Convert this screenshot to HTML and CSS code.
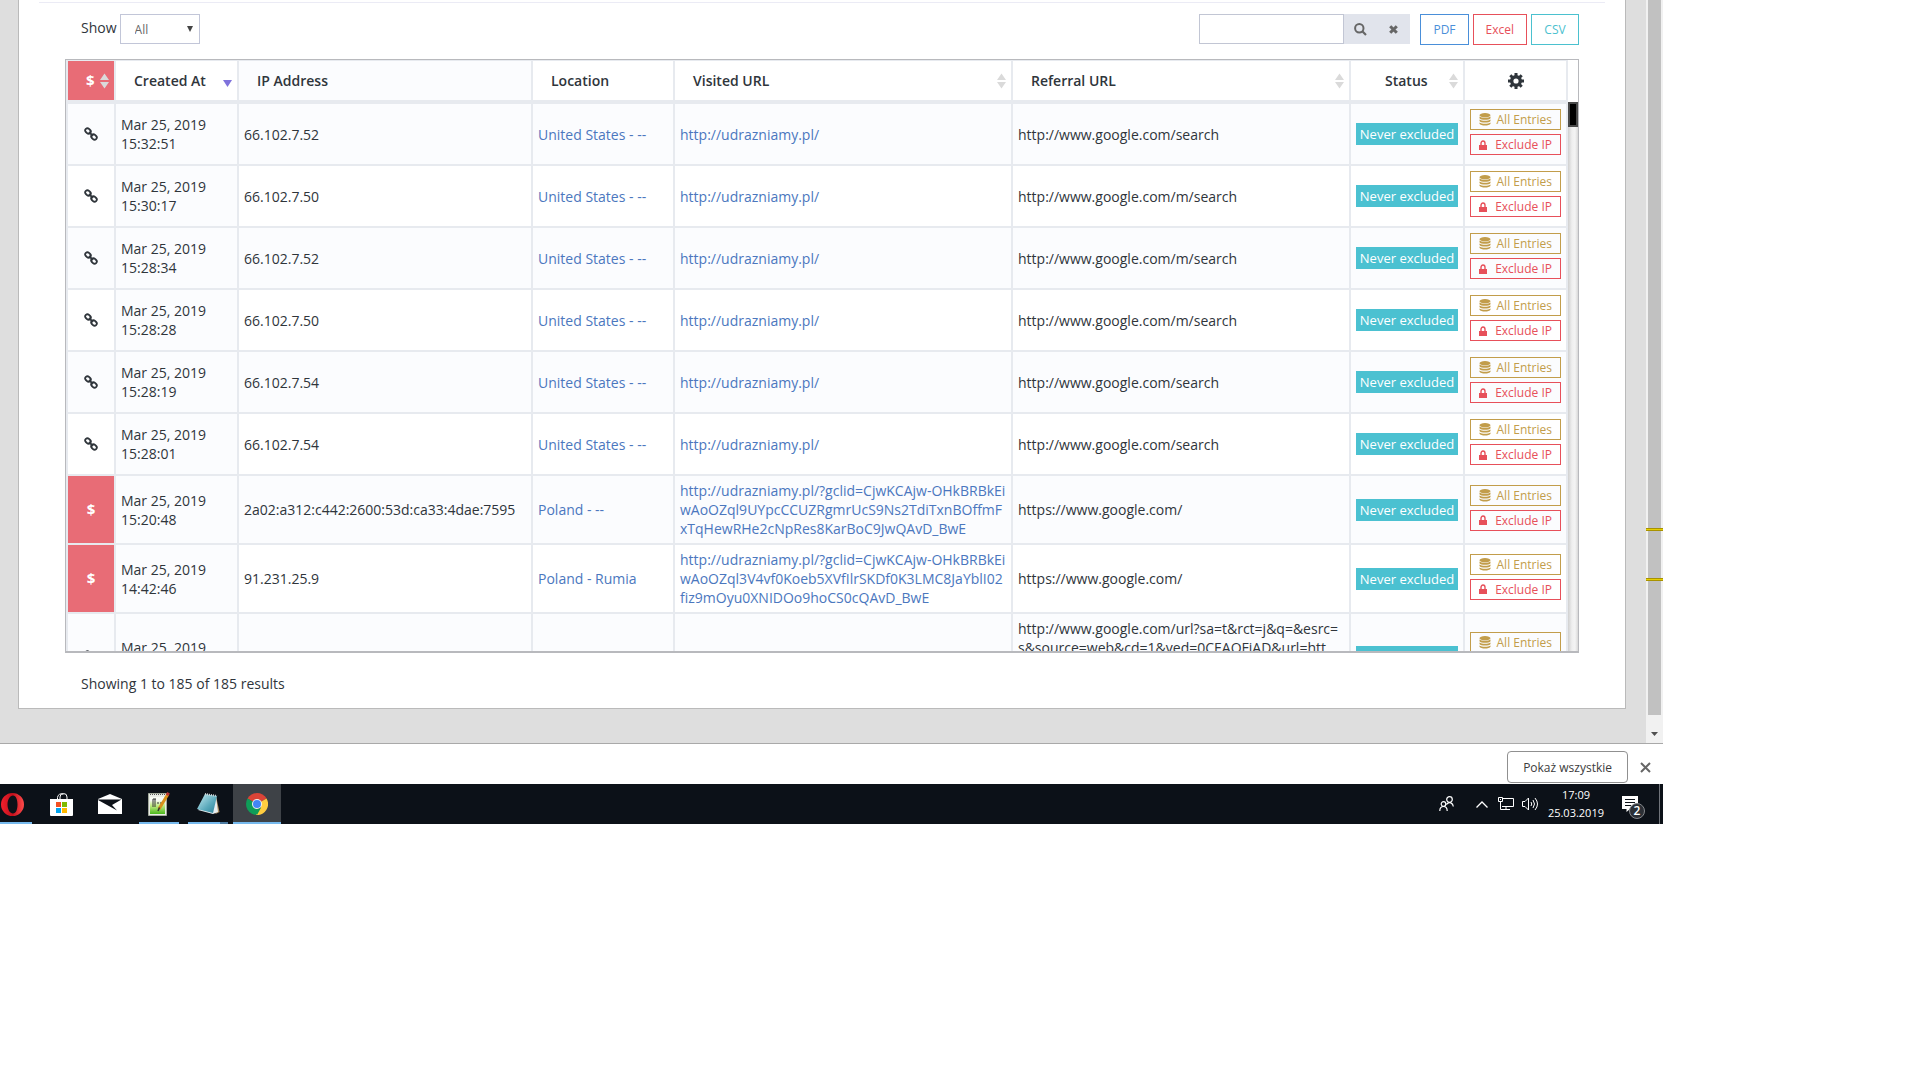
FILE: index.html
```html
<!DOCTYPE html>
<html lang="pl">
<head>
    <meta charset="UTF-8">
    <meta name="viewport" content="width=device-width, initial-scale=1.0">
    <title>Click log</title>
    <link rel="stylesheet" href="styles.css">
</head>
<body>
    <svg class="sprite" aria-hidden="true">
        <symbol id="i-link" viewBox="0 0 14 14">
            <g fill="none" stroke="currentColor" stroke-width="1.800">
                <rect x="-3" y="-2.200" width="6" height="4.400" rx="2.200" transform="translate(4 4) rotate(45)"/>
                <rect x="-3" y="-2.200" width="6" height="4.400" rx="2.200" transform="translate(10 10) rotate(45)"/>
                <path d="M5 5l4 4"/>
            </g>
        </symbol>
        <symbol id="i-db" viewBox="0 0 12 13">
            <ellipse cx="6" cy="2.2" rx="5.5" ry="2.2"/>
            <path d="M.5 3.6c2 1.8 9 1.8 11 0v1.6c-1 2-10 2-11 0zM.5 6.5c2 1.8 9 1.8 11 0v1.6c-1 2-10 2-11 0zM.5 9.4c2 1.8 9 1.8 11 0v1.4c-1 2.4-10 2.4-11 0z"/>
        </symbol>
        <symbol id="i-lock" viewBox="0 0 8 10">
            <path d="M0 5h8v5H0z"/>
            <path d="M2 5V3.2a2 2.2 0 0 1 4 0V5" fill="none" stroke="currentColor" stroke-width="1.4"/>
        </symbol>
        <symbol id="i-sort" viewBox="0 0 9 16">
            <path d="M4.500 .5L9 7H0zM0 9h9l-4.500 6.500z"/>
        </symbol>
    </svg>

    <div class="screen">
        <main class="viewport">
            <div class="page">
                <section class="card">
                    <hr class="divider">
                    <div class="toolbar">
                        <label for="show">Show</label>
                        <select id="show" class="show-select"><option>All</option></select>
                        <div class="search">
                            <input type="text" aria-label="Search">
                            <button type="button" aria-label="Search">
                                <svg width="13" height="13" viewBox="0 0 13 13"><circle cx="5.300" cy="5.300" r="4.200" fill="none" stroke="currentColor" stroke-width="2"/><path d="M8.300 8.300l3.700 3.700" stroke="currentColor" stroke-width="2.200"/></svg>
                            </button>
                            <button type="button" aria-label="Clear">
                                <svg width="9" height="9" viewBox="0 0 9 9"><path d="M1.200 1.200l6.600 6.600M7.800 1.200L1.200 7.800" stroke="currentColor" stroke-width="3"/></svg>
                            </button>
                        </div>
                        <div class="exports">
                            <button type="button" class="btn blue">PDF</button>
                            <button type="button" class="btn red">Excel</button>
                            <button type="button" class="btn teal">CSV</button>
                        </div>
                    </div>

                    <div class="grid-wrap">
                        <div class="grid-scroll">
                            <table class="grid">
                                <colgroup>
                                    <col class="c-type"><col class="c-date"><col class="c-ip"><col class="c-loc"><col class="c-url"><col class="c-url"><col class="c-status"><col class="c-act">
                                </colgroup>
                                <thead>
                                    <tr>
                                        <th class="money"><span class="th">$<svg class="sort"><use href="#i-sort"/></svg></span></th>
                                        <th><span class="th">Created At<svg class="sort-down" width="9" height="7" viewBox="0 0 9 7"><path d="M0 0h9L4.500 7z"/></svg></span></th>
                                        <th><span class="th">IP Address</span></th>
                                        <th><span class="th">Location</span></th>
                                        <th><span class="th">Visited URL<svg class="sort"><use href="#i-sort"/></svg></span></th>
                                        <th><span class="th">Referral URL<svg class="sort"><use href="#i-sort"/></svg></span></th>
                                        <th class="center"><span class="th">Status<svg class="sort"><use href="#i-sort"/></svg></span></th>
                                        <th class="center"><svg class="gear" width="16" height="16" viewBox="0 0 16 16"><circle cx="8" cy="8" r="4.300" fill="none" stroke="currentColor" stroke-width="3.400"/><path d="M8 0v3M8 13v3M0 8h3M13 8h3M2.300 2.300l2.200 2.200M11.500 11.500l2.200 2.200M2.300 13.700l2.200-2.200M11.500 4.500l2.200-2.200" stroke="currentColor" stroke-width="3"/></svg></th>
                                    </tr>
                                </thead>
                                <tbody id="rows"></tbody>
                            </table>
                        </div>
                        <div class="grid-bar"><div class="grid-thumb"></div></div>
                    </div>

                    <p class="summary">Showing 1 to 185 of 185 results</p>
                </section>
            </div>
            <div class="page-bar">
                <div class="page-thumb"></div>
                <svg class="page-arrow" width="7" height="4" viewBox="0 0 7 4"><path d="M0 0h7L3.500 4z"/></svg>
                <i class="mark first"></i>
                <i class="mark second"></i>
            </div>
        </main>

        <div class="downloads">
            <button type="button" class="show-all">Pokaż wszystkie</button>
            <button type="button" class="close" aria-label="Zamknij">
                <svg width="11" height="11" viewBox="0 0 11 11"><path d="M1 1l9 9M10 1l-9 9" stroke="currentColor" stroke-width="2"/></svg>
            </button>
        </div>

        <footer class="taskbar">
            <div class="apps">
                <button type="button" class="app open" aria-label="Opera">
                    <svg width="23" height="23" viewBox="0 0 23 23"><defs><linearGradient id="op" x1="0" x2="1"><stop offset="0" stop-color="#f0202c"/><stop offset=".5" stop-color="#c3101c"/><stop offset="1" stop-color="#ff4b4b"/></linearGradient></defs><path fill="url(#op)" fill-rule="evenodd" d="M11.500 0a11.500 11.500 0 1 0 0 23a11.500 11.500 0 1 0 0-23zM12 2.500c3 0 4.500 4 4.500 9s-1.500 9-4.500 9s-5.500-4-5.500-9s2.500-9 5.500-9z"/></svg>
                </button>
                <button type="button" class="app" aria-label="Microsoft Store">
                    <svg width="23" height="23" viewBox="0 0 23 23"><path d="M7.500 7V4.500a4 4 0 0 1 6-3.200M10 7V4a3.500 3.500 0 0 1 7 0v3" fill="none" stroke="#fff"/><path d="M0 6h23v16q0 1-1 1H1q-1 0-1-1z" fill="#fff"/><path fill="#f25022" d="M6 9h5v5H6z"/><path fill="#7fba00" d="M12 9h5v5h-5z"/><path fill="#00a4ef" d="M6 15h5v5H6z"/><path fill="#ffb900" d="M12 15h5v5h-5z"/></svg>
                </button>
                <button type="button" class="app" aria-label="Mail">
                    <svg width="24" height="20" viewBox="0 0 24 20"><path fill="#fff" d="M0 5l12-5l12 5v15H0z"/><path fill="#0d1118" d="M0 5.500h23.500L14 11l5 5.500L0 6z"/></svg>
                </button>
                <button type="button" class="app open" aria-label="Notepad++">
                    <svg width="22" height="24" viewBox="0 0 22 24"><defs><linearGradient id="np" y2="1" x2="0"><stop offset=".2" stop-color="#f8fbf4"/><stop offset=".5" stop-color="#c4ec84"/><stop offset="1" stop-color="#4bb81c"/></linearGradient></defs><path fill="#e9ece6" stroke="#a3aa9c" d="M.5 1.500h18v22H.5z"/><path fill="url(#np)" d="M2 5h15v17H2z"/><path d="M2 2.500h15" stroke="#555" stroke-dasharray="1 1"/><path d="M5 7v8M7 7v8M5 7h3M9 11h2M12 11h2" stroke="#333" fill="none"/><path d="M20 2L11 17" stroke="#d9911b" stroke-width="3"/><path d="M20.600 .8l-1.500 2.500" stroke="#b93333" stroke-width="3"/><path d="M11.500 15.500l-1.500 3.500" stroke="#333" stroke-width="1.500"/></svg>
                </button>
                <button type="button" class="app open group" aria-label="Notatnik">
                    <svg width="23" height="22" viewBox="0 0 23 22"><defs><linearGradient id="nt" x2="1" y2="1"><stop offset="0" stop-color="#c9edf3"/><stop offset=".6" stop-color="#5aa9bb"/><stop offset="1" stop-color="#2b7f96"/></linearGradient></defs><path fill="#a98b5e" d="M19 3l3.500 16-4 2z"/><path fill="#e8eef0" d="M1 17l15 4 5-2-2-16z"/><path fill="url(#nt)" d="M8 1l12 2-4 17L0 16z"/><path d="M8 1l12 2" stroke="#d5dadb" stroke-width="2" stroke-dasharray="1 1"/></svg>
                </button>
                <button type="button" class="app open active" aria-label="Google Chrome">
                    <svg width="22" height="22" viewBox="0 0 22 22"><path fill="#db4437" d="M11 11L1.500 5.500a11 11 0 0 1 19 0z"/><path fill="#0f9d58" d="M11 11l0 11A11 11 0 0 1 1.500 5.500z"/><path fill="#ffcd40" d="M11 11l9.500-5.500A11 11 0 0 1 10 22l5-8z"/><path fill="#db4437" d="M11 6h9.700L18 3H6z"/><path fill="#0f9d58" d="M1.500 5.500l5 8.500 4 2.200 4.600-1.700L11 22z"/><circle cx="11" cy="11" r="5" fill="#f1f1f1"/><circle cx="11" cy="11" r="4" fill="#4285f4"/></svg>
                </button>
            </div>
            <div class="tray">
                <svg class="people" width="15" height="16" viewBox="0 0 15 16"><g fill="none" stroke="#fff" stroke-width="1.200"><circle cx="10.500" cy="3.500" r="2.800"/><circle cx="4.500" cy="8" r="2.300"/><path d="M.8 15c0-6 7.400-6 7.400 0M7.300 8.500c3-3.500 6.700-1.500 7 2"/></g></svg>
                <svg class="chevron" width="12" height="7" viewBox="0 0 12 7"><path d="M.5 6.500L6 1l5.500 5.500" fill="none" stroke="#fff" stroke-width="1.300"/></svg>
                <svg class="network" width="16" height="14" viewBox="0 0 16 14"><path d="M5 1.500h10.500v8H4M8 10v3M4 12.500h8M.5 .5h4v4h-4zM2.500 4.500v8H6M2 2.500h1" fill="none" stroke="#fff"/></svg>
                <svg class="sound" width="17" height="14" viewBox="0 0 17 14"><path d="M.5 4.500h2.500l3.500-3.500v12L3 9.500H.5zM9 5q1.500 2 0 4M11 3q3 4 0 8M13 1q5 6 0 12" fill="none" stroke="#fff"/></svg>
                <div class="clock"><span>17:09</span><span>25.03.2019</span></div>
                <div class="notices">
                    <svg width="16" height="16" viewBox="0 0 16 16"><path fill="#fff" d="M0 0h16v13h-8l-3.500 3v-3H0z"/><path d="M3 3.500h10M3 6.500h10M3 9.500h6" stroke="#0c1118"/></svg>
                    <span class="count">2</span>
                </div>
            </div>
        </footer>
    </div>

    <script>
        const us = "United States - --";
        const home = "http://udrazniamy.pl/";
        const google = "http://www.google.com/";
        const visits = [
            ["15:32:51", "66.102.7.52", us, home, google + "search"],
            ["15:30:17", "66.102.7.50", us, home, google + "m/search"],
            ["15:28:34", "66.102.7.52", us, home, google + "m/search"],
            ["15:28:28", "66.102.7.50", us, home, google + "m/search"],
            ["15:28:19", "66.102.7.54", us, home, google + "search"],
            ["15:28:01", "66.102.7.54", us, home, google + "search"],
            ["15:20:48", "2a02:a312:c442:2600:53d:ca33:4dae:7595", "Poland - --", home + "?gclid=CjwKCAjw-OHkBRBkEi<br>wAoOZql9UYpcCCUZRgmrUcS9Ns2TdiTxnBOffmF<br>xTqHewRHe2cNpRes8KarBoC9JwQAvD_BwE", "https://www.google.com/", true],
            ["14:42:46", "91.231.25.9", "Poland - Rumia", home + "?gclid=CjwKCAjw-OHkBRBkEi<br>wAoOZql3V4vf0Koeb5XVfIlrSKDf0K3LMC8JaYblI02<br>fiz9mOyu0XNIDOo9hoCS0cQAvD_BwE", "https://www.google.com/", true],
            ["", "", "", "", google + "url?sa=t&amp;rct=j&amp;q=&amp;esrc=<br>s&amp;source=web&amp;cd=1&amp;ved=0CEAQFjAD&amp;url=htt<br><br><br>"]
        ];

        document.getElementById("rows").innerHTML = visits.map(([time, ip, place, url, ref, paid]) => `
            <tr>
                <td class="type ${paid ? "money" : ""}">${paid ? "$" : '<svg class="link"><use href="#i-link"/></svg>'}</td>
                <td class="date">Mar 25, 2019<br>${time || "<br>"}</td>
                <td>${ip}</td>
                <td>${place ? `<a href="#">${place}</a>` : ""}</td>
                <td>${url ? `<a href="#">${url}</a>` : ""}</td>
                <td>${ref}</td>
                <td><span class="badge">Never excluded</span></td>
                <td>
                    <button type="button" class="row-btn gold"><svg class="db"><use href="#i-db"/></svg>All Entries</button>
                    <button type="button" class="row-btn red"><svg class="lock"><use href="#i-lock"/></svg>Exclude IP</button>
                </td>
            </tr>`).join("");
    </script>
</body>
</html>
```

FILE: styles.css
```css
* {
    box-sizing: border-box;
}
body {
    margin: 0;
    background: #fff;
    color: #2f353b;
    font-family: "Open Sans", sans-serif;
    font-size: 14px;
    line-height: 19px;
}
button, input, select {
    font-family: inherit;
    border-radius: 0;
    margin: 0;
}
svg {
    fill: currentColor;
}
a {
    color: #4b77be;
    text-decoration: none;
}
.sprite {
    position: absolute;
    width: 0;
    height: 0;
}
.screen {
    max-width: 1663px;
}
.viewport {
    display: flex;
    border-bottom: 1px solid #a9a9a9;
}
.page {
    flex: 1;
    min-width: 0;
    padding: 0 20px 34px 18px;
    background: #dedede;
}
.card {
    background: #fff;
    border: 1px solid #bababa;
    border-top: 0;
    padding: 2px 46px 15px;
}
.divider {
    margin: 0 -26px;
    border: 0;
    border-top: 1px solid #ebebf5;
}

/* toolbar above the table */
.toolbar {
    display: flex;
    align-items: flex-start;
    padding: 11px 0 14px 16px;
}
.toolbar label {
    line-height: 28px;
}
.show-select {
    width: 80px;
    height: 30px;
    margin-left: 3px;
    padding: 0 14px;
    border: 1px solid #c2c6d8;
    appearance: none;
    background: #fff url("data:image/svg+xml,%3Csvg xmlns='http://www.w3.org/2000/svg' width='6' height='6'%3E%3Cpath d='M0 0h6L3 6z' fill='%23444'/%3E%3C/svg%3E") no-repeat right 6px center;
    color: #666;
    font-size: 12px;
}
.search {
    display: flex;
    height: 30px;
    margin-left: auto;
}
.search input {
    width: 145px;
    border: 1px solid #c2c6d4;
}
.search button {
    display: flex;
    align-items: center;
    justify-content: center;
    width: 33px;
    padding: 0;
    border: 0;
    background: #e1e4ec;
    color: #666;
}
.exports {
    display: flex;
    gap: 4px;
    margin-left: 10px;
}
.btn {
    min-width: 48px;
    height: 31px;
    padding: 0 12px;
    border: 1px solid;
    background: #fff;
    font-size: 12px;
}
.blue {
    color: #4a8fd9;
}
.red {
    color: #e7505a;
}
.teal {
    color: #4bc1cf;
}
.gold {
    color: #c29d4b;
}

/* visits table */
.grid-wrap {
    display: flex;
    height: 594px;
    border: 1px solid #b8b9bd;
    border-bottom-width: 2px;
}
.grid-scroll {
    flex: 1;
    overflow: hidden;
}
.grid {
    width: 100%;
    table-layout: fixed;
    border-collapse: separate;
    border-spacing: 0;
    border-left: 2px solid #e7eaef;
    border-top: 1px solid #e7eaef;
}
.c-type { width: 48px; }
.c-date { width: 123px; }
.c-ip { width: 294px; }
.c-loc { width: 142px; }
.c-status { width: 114px; }
.c-act { width: 103px; }
.grid th, .grid td {
    border-right: 2px solid #e7eaef;
    border-bottom: 2px solid #e7eaef;
    text-align: left;
}
.grid th {
    height: 43px;
    padding: 0 5px 0 18px;
    border-bottom-width: 4px;
    font-weight: 600;
}
.grid th:nth-child(3) {
    background: #fbfcfe;
}
.grid td {
    padding: 5px;
}
.grid tbody tr:nth-child(odd), .grid .date {
    background: #fbfcfe;
}
.grid .type {
    text-align: center;
}
.grid .money {
    background: #e86c76;
    color: #fff;
    font-size: 15px;
    font-weight: 700;
}
.grid .center {
    padding-left: 5px;
    text-align: center;
}
.th {
    display: flex;
    align-items: center;
    justify-content: space-between;
}
.center .th {
    padding-left: 29px;
}
.sort {
    width: 9px;
    height: 16px;
    color: #dadada;
}
.sort-down {
    margin-top: 6px;
    color: #7f72dc;
}
.gear {
    display: block;
    margin: 0 auto;
}
.link {
    display: block;
    width: 14px;
    height: 14px;
    margin: 0 auto;
}
.badge {
    display: block;
    height: 22px;
    background: #4bc1d1;
    color: #fff;
    font-size: 13px;
    line-height: 22px;
    text-align: center;
    white-space: nowrap;
}
.row-btn {
    display: flex;
    align-items: center;
    justify-content: space-between;
    width: 100%;
    height: 21px;
    margin-bottom: 4px;
    padding: 0 8px;
    border: 1px solid;
    background: none;
    font-size: 12px;
}
.db {
    width: 12px;
    height: 13px;
}
.lock {
    width: 8px;
    height: 10px;
}
.grid-bar {
    width: 10px;
    margin-top: 42px;
    background: linear-gradient(90deg, #d0d0d0, #efefef 40%, #f4f4f4 70%, #d8d8d8);
}
.grid-thumb {
    height: 25px;
    border: 2px solid #4a4a4a;
    background: #000;
}
.summary {
    margin: 21px 0 0 16px;
}

/* window scrollbar */
.page-bar {
    position: relative;
    display: flex;
    flex-direction: column;
    align-items: center;
    width: 17px;
    background: #f1f1f1;
}
.page-thumb {
    flex: 1;
    width: 13px;
    background: #c1c1c1;
}
.page-arrow {
    margin: 17px 0 7px;
    color: #505050;
}
.mark {
    position: absolute;
    left: 0;
    width: 100%;
    height: 3px;
    border: 1px solid #a89200;
    border-width: 1px 0;
    background: #e6cf00;
}
.first {
    top: 528px;
}
.second {
    top: 578px;
}

.downloads {
    display: flex;
    align-items: center;
    justify-content: flex-end;
    gap: 12px;
    height: 40px;
    padding: 6px 12px 0 0;
}
.show-all {
    height: 32px;
    padding: 0 15px;
    border: 1px solid #909090;
    border-radius: 4px;
    background: #fff;
    color: #3c3c3c;
    font-size: 12px;
}
.close {
    display: flex;
    padding: 0;
    border: 0;
    background: none;
    color: #666;
}

.taskbar {
    display: flex;
    justify-content: space-between;
    height: 40px;
    overflow: hidden;
    background: #0c1118;
    color: #fff;
}
.apps {
    display: flex;
    gap: 1px;
    margin-left: -12px;
}
.app {
    display: flex;
    align-items: center;
    justify-content: center;
    width: 48px;
    padding: 0;
    border: 0;
    background: no-repeat center bottom;
}
.open {
    background-image: linear-gradient(#76b9ed, #76b9ed);
    background-size: 40px 2px;
}
.group {
    background-image: linear-gradient(90deg, #76b9ed 80%, #4d7ca3 80%);
}
.active {
    background-color: #3e4247;
    background-size: 100% 2px;
}
.tray {
    display: flex;
    align-items: center;
    padding-right: 3px;
}
.people {
    margin-right: 22px;
}
.chevron {
    margin-right: 10px;
}
.network {
    margin-right: 8px;
}
.sound {
    margin-right: 9px;
}
.clock {
    display: flex;
    flex-direction: column;
    align-items: center;
    margin-right: 18px;
    font-size: 11px;
    line-height: 18px;
}
.notices {
    position: relative;
    display: flex;
    align-items: center;
    height: 40px;
    padding-right: 21px;
    border-right: 1px solid #70747a;
}
.count {
    position: absolute;
    left: 7px;
    top: 19px;
    width: 16px;
    height: 16px;
    border: 1px solid #85888c;
    border-radius: 50%;
    background: #2b2f35;
    font-size: 12px;
    font-weight: 600;
    line-height: 14px;
    text-align: center;
}
```
